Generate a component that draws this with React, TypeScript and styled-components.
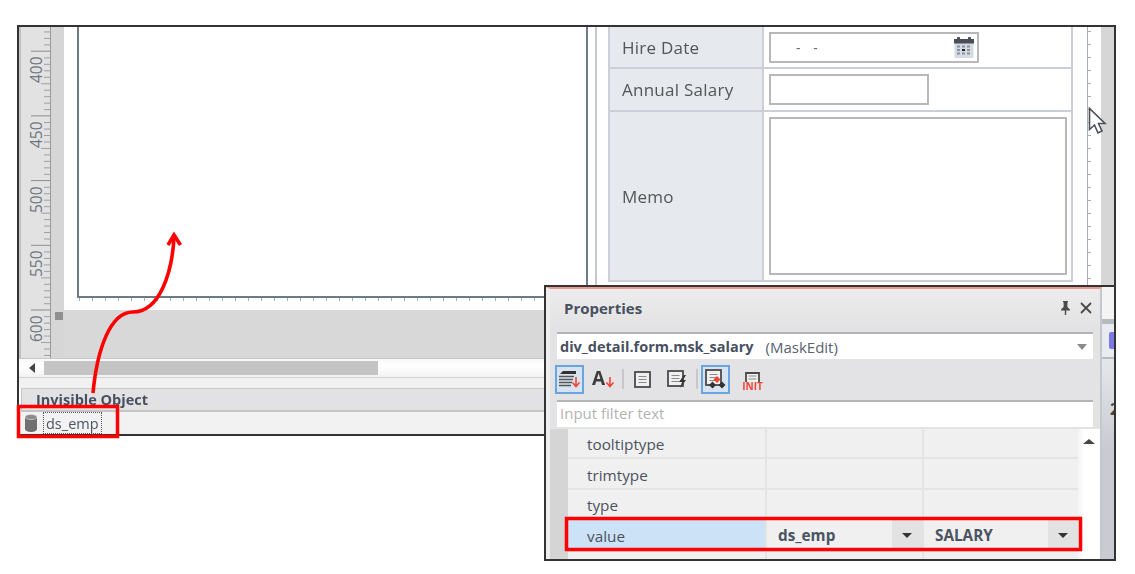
import React from "react";
import styled, { createGlobalStyle } from "styled-components";

const GlobalStyle = createGlobalStyle`
  html, body { margin: 0; padding: 0; background: #fff; }
  body { font-family: "Open Sans", "Liberation Sans", sans-serif; }
`;

const Page = styled.div`
  position: relative;
  width: 1135px;
  height: 574px;
  overflow: hidden;
  padding: 25px 0 0 17px;
  box-sizing: border-box;
  filter: blur(0.45px);
`;

const Frame = styled.div`
  width: 1099px;
  height: 411px;
  box-sizing: border-box;
  border: 2px solid #333;
  display: flex;
  flex-direction: column;
`;

const DesignRow = styled.div`
  display: flex;
  height: 331px;
`;

const Workspace = styled.div`
  flex: 1;
  display: flex;
  flex-direction: column;
`;

const Sheet = styled.div`
  height: 283px;
  background: #fff;
  padding-left: 13px;
  display: flex;
  align-items: flex-start;
`;

const Canvas = styled.div`
  width: 511px;
  height: 271px;
  box-sizing: border-box;
  border-left: 2px solid #6d7a88;
  border-right: 2px solid #6d7a88;
  border-bottom: 2px solid #6d7a88;
  background: #fff;
  position: relative;
  &::after {
    content: "";
    position: absolute;
    left: 0;
    right: 0;
    bottom: -5px;
    height: 3px;
    background: repeating-linear-gradient(90deg, #a8aeb5 0 1px, transparent 1px 13px);
  }
`;

const FormPane = styled.div`
  margin-left: 7px;
  width: 479px;
  height: 283px;
  box-sizing: border-box;
  border-left: 2px solid #c4c8ce;
  padding-left: 11px;
`;

const FormTable = styled.div`
  width: 465px;
  height: 255px;
  box-sizing: border-box;
  border-left: 2px solid #ccd0d6;
  border-right: 2px solid #ccd0d6;
  border-bottom: 2px solid #ccd0d6;
  display: grid;
  grid-template-columns: 154px 1fr;
  grid-template-rows: 42px 43px 1fr;
`;

const FormLabel = styled.div`
  background: #e6e9ee;
  border-right: 2px solid #ccd0d6;
  border-bottom: 2px solid #ccd0d6;
  padding-left: 12px;
  display: flex;
  align-items: center;
  font-size: 17px;
  letter-spacing: 0.25px;
  color: #555;
  &:nth-last-child(2) { border-bottom: 0; }
`;

const FormValue = styled.div`
  border-bottom: 2px solid #ccd0d6;
  padding: 5px 0 0 5px;
  &:last-child { border-bottom: 0; }
`;

const Field = styled.div<{ $w: number; $h: number }>`
  position: relative;
  width: ${(p) => p.$w}px;
  height: ${(p) => p.$h}px;
  box-sizing: border-box;
  border: 2px solid #b8b8b8;
  background: #fff;
  font-size: 14px;
  color: #666;
`;

const DateDashes = styled.span`
  position: absolute;
  left: 25px;
  top: 4px;
  letter-spacing: 1px;
  word-spacing: 7px;
`;

const CalendarSlot = styled.span`
  position: absolute;
  right: 3px;
  top: 3px;
  line-height: 0;
`;

const TickRail = styled.div`
  margin-left: 13px;
  width: 13px;
  height: 283px;
  border-left: 1px solid #a8aeb5;
  background: repeating-linear-gradient(180deg, #a8aeb5 0 1px, transparent 1px 13px) 0 4px / 3px 100% no-repeat;
`;

const SideStrip = styled.div`
  margin-left: auto;
  width: 13px;
  height: 283px;
  background: #d6d6d6;
`;

const GrayBand = styled.div`
  flex: 1;
  background: #d8d8d8;
  position: relative;
`;

const CornerHandle = styled.span`
  position: absolute;
  left: -9px;
  top: 2px;
  width: 8px;
  height: 8px;
  background: #8f8f8f;
`;

const ScrollRow = styled.div`
  height: 20px;
  box-sizing: border-box;
  border-top: 1px solid #c8c8c8;
  border-bottom: 1px solid #d0d0d0;
  background: linear-gradient(#f8f8f8, #fff 40%, #f2f2f2);
  display: flex;
  align-items: center;
  padding-left: 10px;
`;

const ScrollArrow = styled.span`
  width: 0;
  height: 0;
  border-style: solid;
  border-width: 5px 6px 5px 0;
  border-color: transparent #444 transparent transparent;
  margin-right: 9px;
`;

const ScrollThumb = styled.span`
  width: 334px;
  height: 14px;
  background: #c4c4c4;
`;

const ScrollGap = styled.div`
  height: 10px;
  background: #f1f1f1;
`;

const InvisibleHead = styled.div`
  height: 24px;
  box-sizing: border-box;
  margin-left: 2px;
  border-left: 1px solid #c4c4c4;
  border-top: 1px solid #c8c8c8;
  border-bottom: 2px solid #c4c4c4;
  background: #e2e2e4;
  padding-left: 14px;
  display: flex;
  align-items: center;
  font-size: 14.5px;
  font-weight: 700;
  color: #47505f;
`;

const InvisibleBody = styled.div`
  height: 22px;
  background: #f2f2f2;
  display: flex;
  align-items: center;
  padding-left: 6px;
`;

const ObjectName = styled.span`
  margin-left: 6px;
  height: 20px;
  padding: 0 2px;
  border: 1px dotted #555;
  display: flex;
  align-items: center;
  font-size: 14.5px;
  color: #4b5563;
`;

const Annotations = styled.svg`
  position: absolute;
  left: 0;
  top: 0;
  z-index: 5;
  pointer-events: none;
`;

const Cursor = styled.svg`
  position: absolute;
  left: 1087px;
  top: 106px;
`;

const Panel = styled.div`
  position: absolute;
  left: 544px;
  top: 285px;
  width: 572px;
  height: 276px;
  box-sizing: border-box;
  border: 2px solid #333;
  display: flex;
  z-index: 2;
  background: #e3e3e5;
`;

const PanelBody = styled.div`
  width: 556px;
  flex: none;
  box-sizing: border-box;
  border-top: 2px solid #ea9a92;
  border-left: 4px solid #eeeeee;
  border-right: 2px solid #c4c8cc;
  display: flex;
  flex-direction: column;
  overflow: hidden;
`;

const TitleBar = styled.div`
  height: 43px;
  flex: none;
  background: linear-gradient(#ececec, #e2e2e4);
  display: flex;
  align-items: center;
  padding: 0 7px 6px 14px;
  box-sizing: border-box;
`;

const Title = styled.span`
  font-size: 15px;
  font-weight: 700;
  color: #47505f;
  flex: 1;
`;

const TitleIcons = styled.span`
  display: flex;
  align-items: center;
  gap: 9px;
  margin-right: 1px;
`;

const InputBar = styled.div`
  height: 27px;
  flex: none;
  box-sizing: border-box;
  margin: 0 7px;
  border-top: 2px solid #b4b4b4;
  background: #fff;
  display: flex;
  align-items: center;
  padding: 0 6px 0 3px;
  font-size: 14.5px;
  color: #47505f;
`;

const ObjectPath = styled.strong`
  font-weight: 700;
  margin-right: 12px;
`;

const ObjectType = styled.span`
  flex: 1;
  font-size: 15px;
  color: #5a6270;
`;

const ComboArrow = styled.span`
  width: 0;
  height: 0;
  border-style: solid;
  border-width: 6px 5px 0;
  border-color: #8a8a8a transparent transparent;
`;

const Toolbar = styled.div`
  height: 41px;
  flex: none;
  box-sizing: border-box;
  display: flex;
  align-items: center;
  padding: 0 0 1px 5px;
`;

const ToolButton = styled.span<{ $active?: boolean; $w?: number }>`
  width: ${(p) => p.$w ?? 29}px;
  height: 29px;
  box-sizing: border-box;
  display: flex;
  align-items: center;
  justify-content: center;
  border: 2px solid ${(p) => (p.$active ? "#68a4e0" : "transparent")};
  background: ${(p) => (p.$active ? "#d7e4f0" : "transparent")};
`;

const ToolSep = styled.span`
  width: 2px;
  height: 20px;
  margin-right: 3px;
  background: #c8c8c8;
`;

const FilterText = styled.span`
  color: #b4b4b4;
  font-size: 15px;
  margin-bottom: 3px;
`;

const PropGrid = styled.div`
  margin-top: 2px;
  flex: 1;
  display: flex;
  min-height: 0;
`;

const Gutter = styled.div`
  width: 18px;
  background: #d5d5d5;
  flex: none;
`;

const PropRows = styled.div`
  flex: 1;
  display: grid;
  grid-template-columns: 197px 155px 1fr;
  grid-template-rows: 28px 29px 28px 30px 29px;
  gap: 2px;
  background: #e4e4e4;
  align-content: start;
`;

const PropCell = styled.div<{ $selected?: boolean }>`
  background: ${(p) => (p.$selected ? "#cce2f6" : "#f0f0f0")};
  display: flex;
  align-items: center;
  box-sizing: border-box;
  padding: 2px 0 0 19px;
  font-size: 15.3px;
  color: #4b5360;
`;

const PropValue = styled(PropCell)`
  padding: 0 0 0 11px;
  font-weight: 700;
  justify-content: space-between;
`;

const DropButton = styled.span`
  width: 30px;
  height: 30px;
  background: #e2e2e2;
  display: flex;
  align-items: center;
  justify-content: center;
  &::after {
    content: "";
    border-style: solid;
    border-width: 5px 5px 0;
    border-color: #333 transparent transparent;
  }
`;

const VScroll = styled.div`
  width: 22px;
  flex: none;
  background: linear-gradient(90deg, #f4f4f4, #fff 30%);
  display: flex;
  justify-content: center;
  padding-top: 10px;
  box-sizing: border-box;
  &::before {
    content: "";
    height: 0;
    border-style: solid;
    border-width: 0 6px 5px;
    border-color: transparent transparent #444;
  }
`;

const DockStrip = styled.div`
  flex: 1;
  display: flex;
  flex-direction: column;
  overflow: hidden;
`;

const DockTop = styled.div`
  height: 32px;
  background: #f4f4f4;
  border-bottom: 5px solid #b4bcc0;
`;

const DockTab = styled.div`
  height: 33px;
  background: #e8ecf0;
  border-bottom: 2px solid #b4bcc0;
  display: flex;
  align-items: center;
  justify-content: flex-end;
`;

const DockGlyph = styled.span`
  width: 5px;
  height: 17px;
  border-radius: 2px 0 0 2px;
  background: #7c78e4;
`;

const DockRest = styled.div`
  flex: 1;
  background: linear-gradient(#e4e7ea, #c8ccd2 45%);
  padding: 40px 0 0 8px;
  font-size: 16px;
  font-weight: 700;
  color: #444;
  line-height: 20px;
`;

const RULER_TICKS = Array.from({ length: 52 }, (_, i) => i);
const RULER_LABELS = [
  { text: "400", tick: 51 },
  { text: "450", tick: 116 },
  { text: "500", tick: 181 },
  { text: "550", tick: 245 },
  { text: "600", tick: 310 },
];

// vertical ruler plus the darker band next to it
const Ruler = () => (
  <svg width={45} height={331} style={{ flex: "none", display: "block" }}>
    <rect width={45} height={331} fill="#d6d6d6" />
    <rect width={32} height={331} fill="#e2e2e2" />
    <rect width={2} height={331} fill="#c2c2c2" />
    <rect x={31} width={1} height={331} fill="#9a9a9a" />
    {RULER_TICKS.map((i) => {
      const y = i * 6.47 - 1;
      const n = i % 10;
      if (n === 4) return <rect key={i} x={12} y={y - 1.2} width={19} height={1} fill="#8d8d8d" />;
      return <rect key={i} x={n === 9 ? 22 : 25} y={y - 1} width={n === 9 ? 9 : 6} height={1} fill="#a0a0a0" />;
    })}
    {RULER_LABELS.map((l) => (
      <text
        key={l.text}
        transform={`translate(23 ${l.tick - 27 + 32}) rotate(-90)`}
        fontFamily="Open Sans, sans-serif"
        fontSize={15.5}
        fill="#6f7680"
      >
        {l.text}
      </text>
    ))}
  </svg>
);

const CalendarIcon = () => (
  <svg width={20} height={21} viewBox="0 0 20 21">
    <rect x={0.5} y={3} width={19} height={18} fill="#d5dbe3" />
    <rect x={0} y={2} width={20} height={4.5} fill="#4a4f57" />
    <rect x={3} y={0} width={3} height={4} rx={1} fill="#4a4f57" />
    <rect x={14} y={0} width={3} height={4} rx={1} fill="#4a4f57" />
    {[3, 8, 13].map((x) =>
      [8.5, 12, 15.5].map((y) => (
        <rect key={`${x}-${y}`} x={x} y={y} width={3} height={2} fill={x === 8 && y === 12 ? "#222" : "#8b929c"} />
      ))
    )}
  </svg>
);

const CylinderIcon = () => (
  <svg width={12} height={18} viewBox="0 0 12 18">
    <path d="M0 3v12c0 1.6 2.7 3 6 3s6-1.4 6-3V3z" fill="#707070" />
    <ellipse cx={6} cy={3} rx={6} ry={2.6} fill="#8c8c8c" stroke="#e8e8e8" strokeWidth={0.6} />
  </svg>
);

const PinIcon = () => (
  <svg width={11} height={14} viewBox="0 0 11 14">
    <path d="M3 0h5v1l-.6.6V6l2.6 2.4V9.5H6.2V14H4.8V9.5H1V8.4L3.6 6V1.6L3 1z" fill="#4a4a4a" />
  </svg>
);

const CloseIcon = () => (
  <svg width={12} height={12} viewBox="0 0 12 12">
    <path d="M1 1l10 10M11 1L1 11" stroke="#4a4a4a" strokeWidth={1.8} />
  </svg>
);

const RedArrow = ({ x }: { x: number }) => (
  <path d={`M${x} 10v9M${x - 3.5} 15.5l3.5 4 3.5-4`} stroke="#f44336" strokeWidth={1.6} fill="none" />
);

const DocLines = () => (
  <>
    <rect x={3} y={3} width={15} height={15} fill="#f0f0f0" stroke="#4a4a4a" strokeWidth={1.8} />
    <path d="M6.5 7.5h8M6.5 10.5h8M6.5 13.5h8" stroke="#8a8a8a" strokeWidth={1.2} />
  </>
);

const SortCategoryIcon = () => (
  <svg width={25} height={25} viewBox="0 0 25 25">
    <path d="M3 7l3-3h13v3z" fill="#333" />
    <path d="M2 9.5h15M2 12.5h14M2 15.5h13M2 18.5h12" stroke="#555" strokeWidth={1.6} />
    <RedArrow x={19} />
  </svg>
);

const SortAlphaIcon = () => (
  <svg width={28} height={29} viewBox="0 -2 28 29">
    <text x={3} y={18} fontFamily="Open Sans, sans-serif" fontWeight={700} fontSize={19} fill="#3c3c3c">
      A
    </text>
    <RedArrow x={21} />
  </svg>
);

const DocIcon = () => (
  <svg width={21} height={21} viewBox="0 0 21 21">
    <DocLines />
  </svg>
);

const DocEventIcon = () => (
  <svg width={27} height={25} viewBox="-2 0 27 25">
    <g transform="translate(0 1)">
      <DocLines />
    </g>
    <path d="M19 8l-5 7h3l-2 6 6-8h-3l3-5z" fill="#333" />
  </svg>
);

const DocDiamondIcon = () => (
  <svg width={25} height={25} viewBox="0 0 25 25">
    <DocLines />
    <path d="M14 9l3.5 3.5L14 16l-3.5-3.5z" fill="#f44336" />
    <path d="M9.5 14.5l3.5 3.5-3.5 3.5L6 18zM19 14.5l3.5 3.5-3.5 3.5-3.5-3.5z" fill="#333" />
  </svg>
);

// page outline stays open at the bottom, the red label sits there
const DocInitIcon = () => (
  <svg width={29} height={29} viewBox="0 0 29 29">
    <path d="M8 17V8h13v9" fill="#f0f0f0" stroke="#4a4a4a" strokeWidth={1.8} />
    <path d="M10.5 11h8M10.5 14h8" stroke="#8a8a8a" strokeWidth={1.2} />
    <text x={14.5} y={25} textAnchor="middle" fontFamily="Open Sans, sans-serif" fontWeight={700} fontSize={10} fill="#f44336">
      INIT
    </text>
  </svg>
);

const PROPERTY_ROWS = ["tooltiptype", "trimtype", "type"];

export default function App() {
  return (
    <Page>
      <GlobalStyle />
      <Frame>
        <DesignRow>
          <Ruler />
          <Workspace>
            <Sheet>
              <Canvas />
              <FormPane>
                <FormTable>
                  <FormLabel>Hire Date</FormLabel>
                  <FormValue>
                    <Field $w={210} $h={31}>
                      <DateDashes>- -</DateDashes>
                      <CalendarSlot>
                        <CalendarIcon />
                      </CalendarSlot>
                    </Field>
                  </FormValue>
                  <FormLabel>Annual Salary</FormLabel>
                  <FormValue>
                    <Field $w={160} $h={31} />
                  </FormValue>
                  <FormLabel>Memo</FormLabel>
                  <FormValue>
                    <Field $w={298} $h={158} />
                  </FormValue>
                </FormTable>
              </FormPane>
              <TickRail />
              <SideStrip />
            </Sheet>
            <GrayBand>
              <CornerHandle />
            </GrayBand>
          </Workspace>
        </DesignRow>
        <ScrollRow>
          <ScrollArrow />
          <ScrollThumb />
        </ScrollRow>
        <ScrollGap />
        <InvisibleHead>Invisible Object</InvisibleHead>
        <InvisibleBody>
          <CylinderIcon />
          <ObjectName>ds_emp</ObjectName>
        </InvisibleBody>
      </Frame>

      <Cursor width={20} height={30} viewBox="0 0 20 30">
        <path d="M2.5 2.5v21l5-4.5 3.5 8 4-2-3.5-7.5h6.5z" fill="#fff" stroke="#4a5058" strokeWidth={1.6} />
      </Cursor>

      <Panel>
        <PanelBody>
          <TitleBar>
            <Title>Properties</Title>
            <TitleIcons>
              <PinIcon />
              <CloseIcon />
            </TitleIcons>
          </TitleBar>
          <InputBar>
            <ObjectPath>div_detail.form.msk_salary</ObjectPath>
            <ObjectType>(MaskEdit)</ObjectType>
            <ComboArrow />
          </InputBar>
          <Toolbar>
            <ToolButton $active>
              <SortCategoryIcon />
            </ToolButton>
            <ToolButton $w={38}>
              <SortAlphaIcon />
            </ToolButton>
            <ToolSep />
            <ToolButton $w={30}>
              <DocIcon />
            </ToolButton>
            <ToolButton $w={39}>
              <DocEventIcon />
            </ToolButton>
            <ToolSep />
            <ToolButton $active>
              <DocDiamondIcon />
            </ToolButton>
            <ToolButton $w={44}>
              <DocInitIcon />
            </ToolButton>
          </Toolbar>
          <InputBar>
            <FilterText>Input filter text</FilterText>
          </InputBar>
          <PropGrid>
            <Gutter />
            <PropRows>
              {PROPERTY_ROWS.map((name) => (
                <React.Fragment key={name}>
                  <PropCell>{name}</PropCell>
                  <PropCell />
                  <PropCell />
                </React.Fragment>
              ))}
              <PropCell $selected>value</PropCell>
              <PropValue>
                ds_emp
                <DropButton />
              </PropValue>
              <PropValue>
                SALARY
                <DropButton />
              </PropValue>
              <PropCell />
              <PropCell />
              <PropCell />
            </PropRows>
            <VScroll />
          </PropGrid>
        </PanelBody>
        <DockStrip>
          <DockTop />
          <DockTab>
            <DockGlyph />
          </DockTab>
          <DockRest>2</DockRest>
        </DockStrip>
      </Panel>

      <Annotations width={1135} height={574}>
        <path d="M93 393C97 350 110 312 133 312C160 312 172 272 174 238" fill="none" stroke="#f00" strokeWidth={3.6} />
        <path d="M168 245L174 235L180.5 245" fill="none" stroke="#f00" strokeWidth={3.6} />
        <rect x={18.5} y={406.5} width={99} height={30} fill="none" stroke="#f00" strokeWidth={3.5} />
        <rect x={566.5} y={518.5} width={514} height={31} fill="none" stroke="#f00" strokeWidth={3.5} />
      </Annotations>
    </Page>
  );
}
